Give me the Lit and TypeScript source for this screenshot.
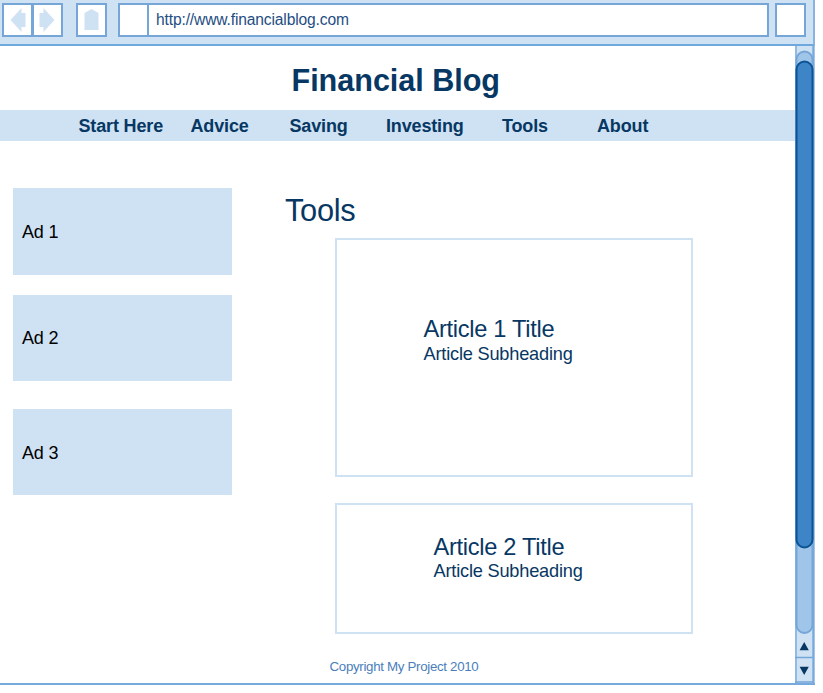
import { LitElement, html, css } from "lit";
import { customElement } from "lit/decorators.js";

@customElement("browser-toolbar")
export class BrowserToolbar extends LitElement {
  static styles = css`
    :host { display: block; flex: none; }
    .bar {
      box-sizing: border-box; height: 46px; width: 815px; display: flex;
      align-items: flex-start; padding: 3px 0 0 1.5px; background: #cfe2f3;
      border-bottom: 2px solid #6fa8dc; border-right: 2px solid #8ab4df;
    }
    .box {
      box-sizing: border-box; height: 34px; width: 31px; flex: none;
      background: #fff; border: 2px solid #76a5d8; display: block;
    }
    .next { margin-left: -1px; }
    .home { margin-left: 13px; }
    .mark { margin-left: 11px; }
    .address {
      width: 622px; margin-left: -2px; padding-left: 7.5px; letter-spacing: -0.14px;
      font: 15.6px/30px "Liberation Sans", Arial, sans-serif; color: #1f4e82;
    }
    .menu { margin-left: 6.5px; }
    svg { display: block; fill: #cfe2f3; }
  `;
  render() {
    return html`
      <div class="bar">
        <div class="box"><svg width="27" height="30" viewBox="0 0 27 30"><path d="M6.5 15 17.5 3v5h4v14h-4v5z" /></svg></div>
        <div class="box next"><svg width="27" height="30" viewBox="0 0 27 30"><path d="M20.5 15 9.5 3v5h-4v14h4v5z" /></svg></div>
        <div class="box home"><svg width="27" height="30" viewBox="0 0 27 30"><path d="M6.5 8l7-4 7 4v17h-14z" /></svg></div>
        <div class="box mark"></div>
        <div class="box address">http://www.financialblog.com</div>
        <div class="box menu"></div>
      </div>
    `;
  }
}

@customElement("scroll-rail")
export class ScrollRail extends LitElement {
  static styles = css`
    :host { display: block; flex: none; width: 20px; }
    svg { display: block; }
  `;
  render() {
    return html`
      <svg width="20" height="637" viewBox="795 46 20 637">
        <rect x="795" y="46" width="20" height="637" fill="#cfe2f3" />
        <path d="M796 46V683M795 657.5h18M795 682h18" fill="none" stroke="#76a5d8" stroke-width="1.3" />
        <rect x="812.3" y="46" width="2.2" height="637" fill="#76a9dc" />
        <rect x="796.5" y="51.5" width="16" height="581.5" rx="8" fill="#9fc5e8" stroke="#76a5d8" stroke-width="2" />
        <rect x="796.5" y="61.5" width="16" height="486" rx="8" fill="#3d85c6" stroke="#0b5394" stroke-width="2" />
        <path d="M804.2 642l4.6 8.3h-9.2zM804.2 675l4.6-8.3h-9.2z" fill="#073763" />
      </svg>
    `;
  }
}

@customElement("app-root")
export class AppRoot extends LitElement {
  static styles = css`
    :host {
      display: flex; flex-direction: column; width: 823px; height: 693px;
      overflow: hidden; background: #fff; color: #073763;
      font-family: "Liberation Sans", Arial, sans-serif; white-space: nowrap;
    }
    .window {
      box-sizing: border-box; width: 815px; height: 639px; display: flex;
      border-bottom: 2px solid #76a9dc;
    }
    .page { width: 795px; height: 637px; }
    h1 { margin: 0; padding-left: 291.5px; height: 64px; font-size: 30.6px; line-height: 69px; letter-spacing: -0.04px; }
    nav {
      height: 30.5px; background: #cfe2f3; display: grid; padding-left: 78.5px;
      grid-template-columns: 112px 99px 96.5px 116px 95px auto;
      font-weight: bold; font-size: 18px; line-height: 32px; letter-spacing: -0.15px;
    }
    .columns { display: flex; padding: 47.5px 0 0 12.5px; }
    aside { width: 219.5px; }
    .ad {
      box-sizing: border-box; height: 86.5px; padding-left: 9.5px; margin-bottom: 20px;
      background: #cfe2f3; color: #000; font-size: 18px; line-height: 88px; letter-spacing: -0.2px;
    }
    .ad.second { margin-bottom: 27.5px; line-height: 87px; }
    main { padding-left: 53px; }
    h2 { margin: 0; height: 50px; font-size: 30.8px; line-height: 45px; font-weight: normal; letter-spacing: -0.3px; }
    .card {
      box-sizing: border-box; width: 358.5px; height: 239px; margin: 0 0 26px 49.5px;
      border: 2px solid #cfe2f3; padding: 75px 0 0 87px;
    }
    .card.short { height: 131px; padding: 28px 0 0 97px; margin-bottom: 0; }
    h3 { margin: 0; font-size: 23.6px; line-height: 28px; font-weight: normal; letter-spacing: -0.28px; }
    p { margin: 0; font-size: 18.2px; line-height: 22px; letter-spacing: -0.2px; }
    .short p { line-height: 21px; }
    footer { padding: 22px 0 0 329.5px; font-size: 13.3px; line-height: 22px; letter-spacing: -0.31px; color: #4a7ebb; }
  `;
  render() {
    return html`
      <browser-toolbar></browser-toolbar>
      <div class="window">
        <div class="page">
          <h1>Financial Blog</h1>
          <nav>
            ${["Start Here", "Advice", "Saving", "Investing", "Tools", "About"].map((t) => html`<span>${t}</span>`)}
          </nav>
          <div class="columns">
            <aside>
              <div class="ad">Ad 1</div>
              <div class="ad second">Ad 2</div>
              <div class="ad">Ad 3</div>
            </aside>
            <main>
              <h2>Tools</h2>
              <div class="card">
                <h3>Article 1 Title</h3>
                <p>Article Subheading</p>
              </div>
              <div class="card short">
                <h3>Article 2 Title</h3>
                <p>Article Subheading</p>
              </div>
            </main>
          </div>
          <footer>Copyright My Project 2010</footer>
        </div>
        <scroll-rail></scroll-rail>
      </div>
    `;
  }
}
